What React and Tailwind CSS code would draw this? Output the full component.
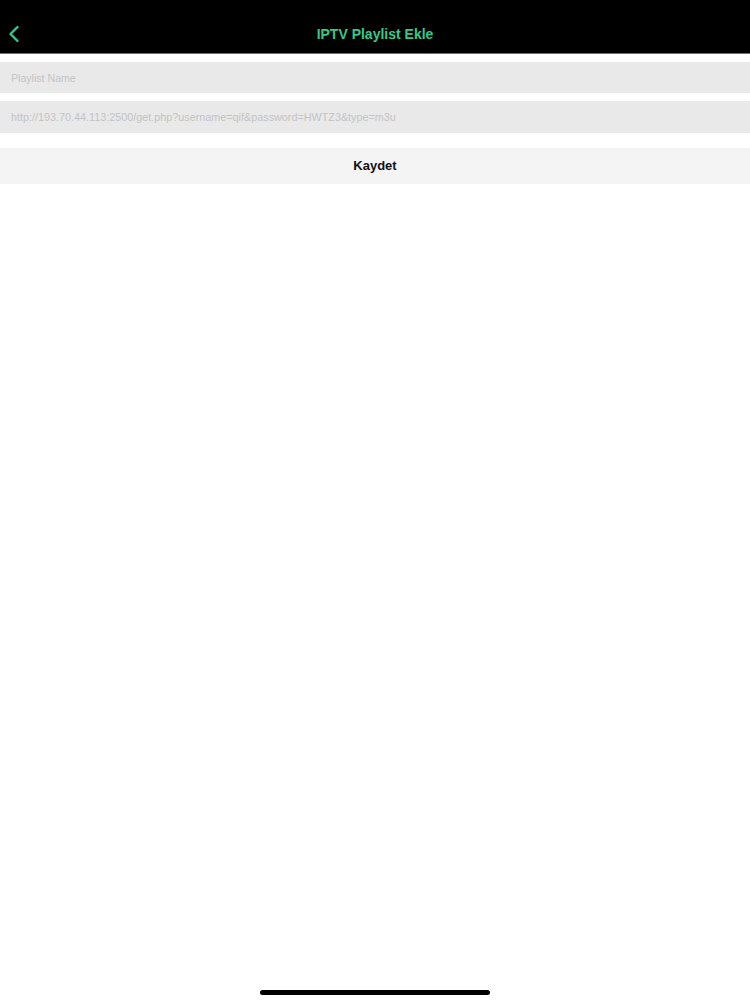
import React, { useState } from "react";

const ChevronLeft = () => (
  <svg width="12" height="18" viewBox="0 0 12 18" fill="none">
    <path
      d="M9.5 2 L2.5 9 L9.5 16"
      stroke="#34c98a"
      strokeWidth="2.4"
      strokeLinecap="round"
      strokeLinejoin="round"
    />
  </svg>
);

const App = () => {
  const [name, setName] = useState("");
  const [url, setUrl] = useState("");

  return (
    <div
      className="relative w-[750px] h-[1000px] bg-white"
      style={{ fontFamily: '"Liberation Sans", Arial, sans-serif' }}
    >
      {/* Header */}
      <div className="relative h-[54px] bg-black border-b border-[#6b6b6b] flex items-end justify-center pb-[12px]">
        <button className="absolute left-[8px] bottom-[10px] p-0">
          <ChevronLeft />
        </button>
        <h1 className="text-[14px] font-bold text-[#34c98a] leading-none">
          IPTV Playlist Ekle
        </h1>
      </div>

      {/* Form */}
      <div className="flex flex-col pt-[8px]">
        <input
          type="text"
          value={name}
          onChange={(e) => setName(e.target.value)}
          placeholder="Playlist Name"
          className="h-[31px] w-full bg-[#e9e9ea] px-[11px] text-[10.6px] text-gray-800 placeholder:text-[#c3c3c5] outline-none"
        />
        <input
          type="text"
          value={url}
          onChange={(e) => setUrl(e.target.value)}
          placeholder="http://193.70.44.113:2500/get.php?username=qif&password=HWTZ3&type=m3u"
          className="mt-[8px] h-[32px] w-full bg-[#e9e9ea] px-[11px] text-[10.8px] text-gray-800 placeholder:text-[#c3c3c5] outline-none"
        />
        <button className="mt-[15px] h-[36px] w-full bg-[#f4f4f5] text-[13px] font-bold text-[#111]">
          Kaydet
        </button>
      </div>

      {/* Home indicator */}
      <div className="absolute left-[260px] top-[990px] w-[230px] h-[5px] rounded-full bg-black" />
    </div>
  );
};

export default App;
